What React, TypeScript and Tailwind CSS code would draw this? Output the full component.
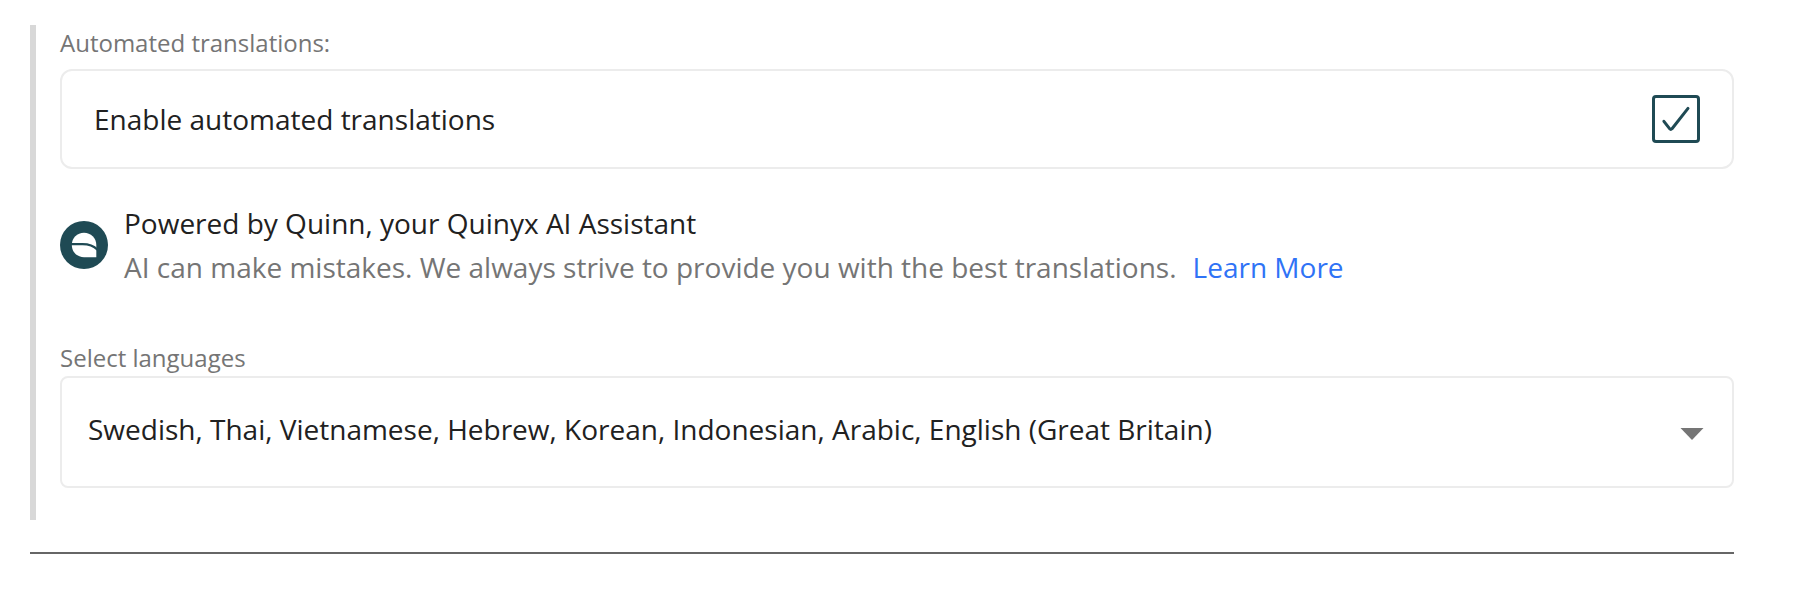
import React, { useState } from 'react';

const LANGUAGES = [
  'Swedish',
  'Thai',
  'Vietnamese',
  'Hebrew',
  'Korean',
  'Indonesian',
  'Arabic',
  'English (Great Britain)',
];

function QuinnLogo() {
  return (
    <svg viewBox="0 0 48 48" className="h-12 w-12 shrink-0" aria-hidden="true">
      <circle cx="24" cy="24" r="24" fill="#1f4a54" />
      <path
        d="M11.8 24C11.800 17 17.200 11.800 24 11.800S36.300 17 36.300 24v12.200H24C17.200 36.200 11.800 31 11.800 24Z"
        fill="#fff"
      />
      <path
        d="M11 23.200h11.500c5.500 0 10.500 1 15 5.600"
        fill="none"
        stroke="#1f4a54"
        strokeWidth="2.2"
      />
    </svg>
  );
}

export default function App() {
  const [enabled, setEnabled] = useState(true);

  return (
    <main className="min-h-screen bg-white pt-[25px] pr-[68px] pl-[30px] font-['Open_Sans',sans-serif] text-[28px] leading-[44px] text-[#212121]">
      <section className="border-l-6 border-[#d8d8d8] pb-8 pl-6">
        <h2 className="mb-2 text-[24px] leading-9 text-[#757575]">Automated translations:</h2>

        <label className="flex items-center justify-between rounded-xl border-2 border-[#ececec] px-8 py-6">
          <span>Enable automated translations</span>
          <span className="grid h-12 w-12 shrink-0">
            <input
              type="checkbox"
              checked={enabled}
              onChange={(e) => setEnabled(e.target.checked)}
              className="col-start-1 row-start-1 appearance-none rounded-[4px] border-3 border-[#1f4a54] bg-white"
            />
            {enabled && (
              <svg
                viewBox="0 0 48 48"
                className="pointer-events-none col-start-1 row-start-1"
                fill="none"
                stroke="#1f4a54"
                strokeWidth="3"
                strokeLinecap="round"
                strokeLinejoin="round"
                aria-hidden="true"
              >
                <path d="M11.900 26.300l5.700 7.400q1.200 1.200 2.400 0L36 13.400" />
              </svg>
            )}
          </span>
        </label>

        <div className="mt-8 flex items-center gap-4">
          <QuinnLogo />
          <div>
            <p>Powered by Quinn, your Quinyx AI Assistant</p>
            <p className="text-[#757575]">
              AI can make mistakes. We always strive to provide you with the best translations.
              <a href="#learn-more" className="ml-4 text-[#2f73f6]">
                Learn More
              </a>
            </p>
          </div>
        </div>

        <label
          htmlFor="languages"
          className="mt-[51px] block text-[24px] leading-9 text-[#757575]"
        >
          Select languages
        </label>
        <div className="relative">
          <select
            id="languages"
            className="block w-full appearance-none rounded-lg border-2 border-[#ececec] bg-white pt-[29px] pr-20 pb-[35px] pl-[26px]"
          >
            <option>{LANGUAGES.join(', ')}</option>
          </select>
          <svg
            viewBox="0 0 24 12"
            className="pointer-events-none absolute top-[52px] right-[30px] h-3 w-6"
            aria-hidden="true"
          >
            <path d="M0.500 0h23L12 12Z" fill="#757575" />
          </svg>
        </div>
      </section>

      <hr className="mt-8 border-t-2 border-[#666]" />
    </main>
  );
}
